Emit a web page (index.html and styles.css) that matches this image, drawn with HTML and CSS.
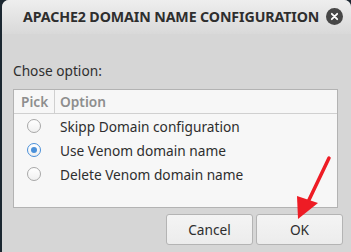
FILE: index.html
```html
<!DOCTYPE html>
<html lang="en">
<head>
    <meta charset="UTF-8">
    <title>Apache2 domain name configuration</title>
    <link rel="stylesheet" href="styles.css">
</head>
<body>
    <div class="dialog">
        <div class="titlebar">
            <h1 class="title">APACHE2 DOMAIN NAME CONFIGURATION</h1>
            <span class="close-btn">
                <svg width="17" height="17" viewBox="0 0 17 17">
                    <circle cx="8.5" cy="8.5" r="8.5" fill="#474747"/>
                    <path d="M5.8 5.8 L11.2 11.2 M11.2 5.8 L5.8 11.2" stroke="#fff" stroke-width="1.8" stroke-linecap="round"/>
                </svg>
            </span>
        </div>

        <div class="content">
            <p class="label">Chose option:</p>

            <div class="list">
                <div class="list-head">
                    <span class="col-pick">Pick</span>
                    <span class="col-option">Option</span>
                </div>
                <div class="row">
                    <span class="col-pick"><span class="radio"></span></span>
                    <span class="col-option">Skipp Domain configuration</span>
                </div>
                <div class="row">
                    <span class="col-pick"><span class="radio checked"></span></span>
                    <span class="col-option">Use Venom domain name</span>
                </div>
                <div class="row">
                    <span class="col-pick"><span class="radio"></span></span>
                    <span class="col-option">Delete Venom domain name</span>
                </div>
            </div>

            <div class="button-group">
                <button class="btn">Cancel</button>
                <button class="btn">OK</button>
            </div>
        </div>

        <!-- red annotation arrow pointing at OK -->
        <svg class="arrow" width="351" height="252" viewBox="0 0 351 252">
            <line x1="329" y1="158" x2="308" y2="202" stroke="#ee1c25" stroke-width="3.5" stroke-linecap="round"/>
            <polygon points="297,196 318,203 298,219" fill="#ee1c25"/>
        </svg>
    </div>
</body>
</html>
```

FILE: styles.css
```css
* {
    margin: 0;
    padding: 0;
    box-sizing: border-box;
}

body {
    width: 351px;
    height: 252px;
    overflow: hidden;
    background: #1b2731;
    font-family: 'Noto Sans', 'Open Sans', sans-serif;
    display: flex;
}

.dialog {
    position: relative;
    flex: 1;
    margin-left: 2px;
    background: #d6d6d6;
    border-radius: 7px 7px 0 0;
    overflow: hidden;
}

.titlebar {
    height: 34px;
    display: flex;
    align-items: center;
    padding: 0 8px 2px 21px;
    background: linear-gradient(#eeeeee, #d9d9d9);
}

.title {
    flex: 1;
    font-size: 14.2px;
    font-weight: 700;
    color: #2e2e2e;
    white-space: nowrap;
    letter-spacing: -0.1px;
}

.close-btn {
    display: flex;
}

.content {
    padding: 28px 8px 0 11px;
}

.label {
    font-size: 13.7px;
    color: #2f2f2f;
    line-height: 17px;
    margin-bottom: 10px;
}

.list {
    height: 119px;
    margin-right: 5px;
    background: #f7f7f7;
    border: 1px solid #b3b3b3;
    font-size: 13.7px;
}

.list-head {
    display: flex;
    height: 24px;
    border-bottom: 1px solid #d0d0d0;
    color: #8e8e8e;
    font-weight: 600;
}

.list-head .col-pick {
    border-right: 1px solid #d0d0d0;
}

.col-pick {
    width: 41px;
    display: flex;
    align-items: center;
    padding-left: 7px;
}

.col-option {
    display: flex;
    align-items: center;
    padding-left: 5px;
}

.row {
    display: flex;
    height: 24px;
    color: #2e2e2e;
}

.row .col-pick {
    padding-left: 13px;
}

.row:first-of-type {
    margin-top: 1px;
}

.radio {
    width: 14px;
    height: 14px;
    border-radius: 50%;
    border: 1px solid #a8a8a8;
    background: linear-gradient(#ffffff, #f0f0f0);
    display: flex;
    align-items: center;
    justify-content: center;
}

.radio.checked {
    border-color: #4a90d9;
}

.radio.checked::after {
    content: '';
    width: 6px;
    height: 6px;
    border-radius: 50%;
    background: #4a90d9;
}

.button-group {
    display: flex;
    justify-content: flex-end;
    gap: 3px;
    margin-top: 6px;
}

.btn {
    width: 87px;
    height: 31px;
    border: 1px solid #b4b4b4;
    border-radius: 3px;
    background: linear-gradient(#f4f4f4, #ececec);
    font-family: 'Noto Sans', 'Open Sans', sans-serif;
    font-size: 13.7px;
    color: #2e2e2e;
}

.arrow {
    position: absolute;
    top: 0;
    left: -2px;
    pointer-events: none;
}
```
